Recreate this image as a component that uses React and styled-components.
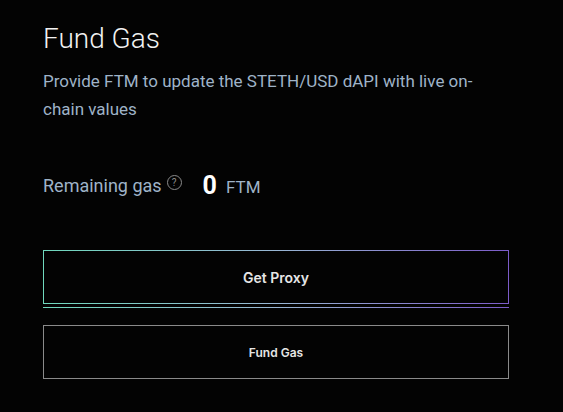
import React from "react";
import styled, { createGlobalStyle } from "styled-components";

const Global = createGlobalStyle`
  html, body { margin: 0; padding: 0; background: #030303; }
  body { font-family: Roboto, "Noto Sans", sans-serif; }
`;

const Page = styled.div`
  width: 563px;
  height: 412px;
  box-sizing: border-box;
  padding: 19px 54px 0 43px;
  background: #030303;
  display: flex;
  flex-direction: column;
`;

const Title = styled.h1`
  margin: 0;
  font-family: Roboto, sans-serif;
  font-size: 28px;
  font-weight: 300;
  line-height: 40px;
  color: #f2f2f2;
`;

const Desc = styled.p`
  margin: 8px 0 0;
  font-family: Roboto, sans-serif;
  font-size: 17px;
  line-height: 28px;
  font-weight: 400;
  color: #9fb3c8;
`;

const GasRow = styled.div`
  margin-top: 47px;
  display: flex;
  align-items: center;
  height: 30px;
`;

const GasLabel = styled.span`
  font-family: Roboto, sans-serif;
  font-size: 18px;
  color: #9fb3c8;
`;

const HelpIcon = styled.span`
  display: inline-flex;
  align-items: center;
  justify-content: center;
  width: 15px;
  height: 15px;
  margin-left: 5px;
  margin-top: -5px;
  border: 1px solid #8a8a8a;
  border-radius: 50%;
  font-size: 10px;
  color: #8a8a8a;
  box-sizing: border-box;
`;

const Amount = styled.span`
  margin-left: 21px;
  font-family: Roboto, sans-serif;
  font-size: 25px;
  font-weight: 700;
  color: #ffffff;
`;

const Unit = styled.span`
  margin-left: 9px;
  margin-top: 3px;
  font-family: Roboto, sans-serif;
  font-size: 17px;
  color: #9fb3c8;
`;

const Buttons = styled.div`
  margin-top: 50px;
  display: flex;
  flex-direction: column;
`;

const gradient = "linear-gradient(90deg, #6fd8bd, #98b6d4 50%, #7c5cc9)";

const GradientFrame = styled.div`
  padding: 1px;
  background: ${gradient};
`;

const GradientButton = styled.button`
  display: block;
  height: 52px;
  width: 100%;
  border: none;
  background: #030303;
  color: #e6e6e6;
  font-family: Inter, sans-serif;
  font-size: 14px;
  font-weight: 600;
  cursor: pointer;
`;

const Underline = styled.div`
  height: 1px;
  margin-top: 3px;
  background: ${gradient};
`;

const PlainButton = styled.button`
  margin-top: 17px;
  height: 54px;
  width: 100%;
  box-sizing: border-box;
  border: 1px solid #8a8a8a;
  background: #030303;
  color: #e6e6e6;
  font-family: Inter, sans-serif;
  font-size: 12px;
  font-weight: 600;
  cursor: pointer;
`;

export default function App() {
  return (
    <>
      <Global />
      <Page>
        <Title>Fund Gas</Title>
        <Desc>Provide FTM to update the STETH/USD dAPI with live on-chain values</Desc>
        <GasRow>
          <GasLabel>Remaining gas</GasLabel>
          <HelpIcon>?</HelpIcon>
          <Amount>0</Amount>
          <Unit>FTM</Unit>
        </GasRow>
        <Buttons>
          <GradientFrame>
            <GradientButton>Get Proxy</GradientButton>
          </GradientFrame>
          <Underline />
          <PlainButton>Fund Gas</PlainButton>
        </Buttons>
      </Page>
    </>
  );
}
